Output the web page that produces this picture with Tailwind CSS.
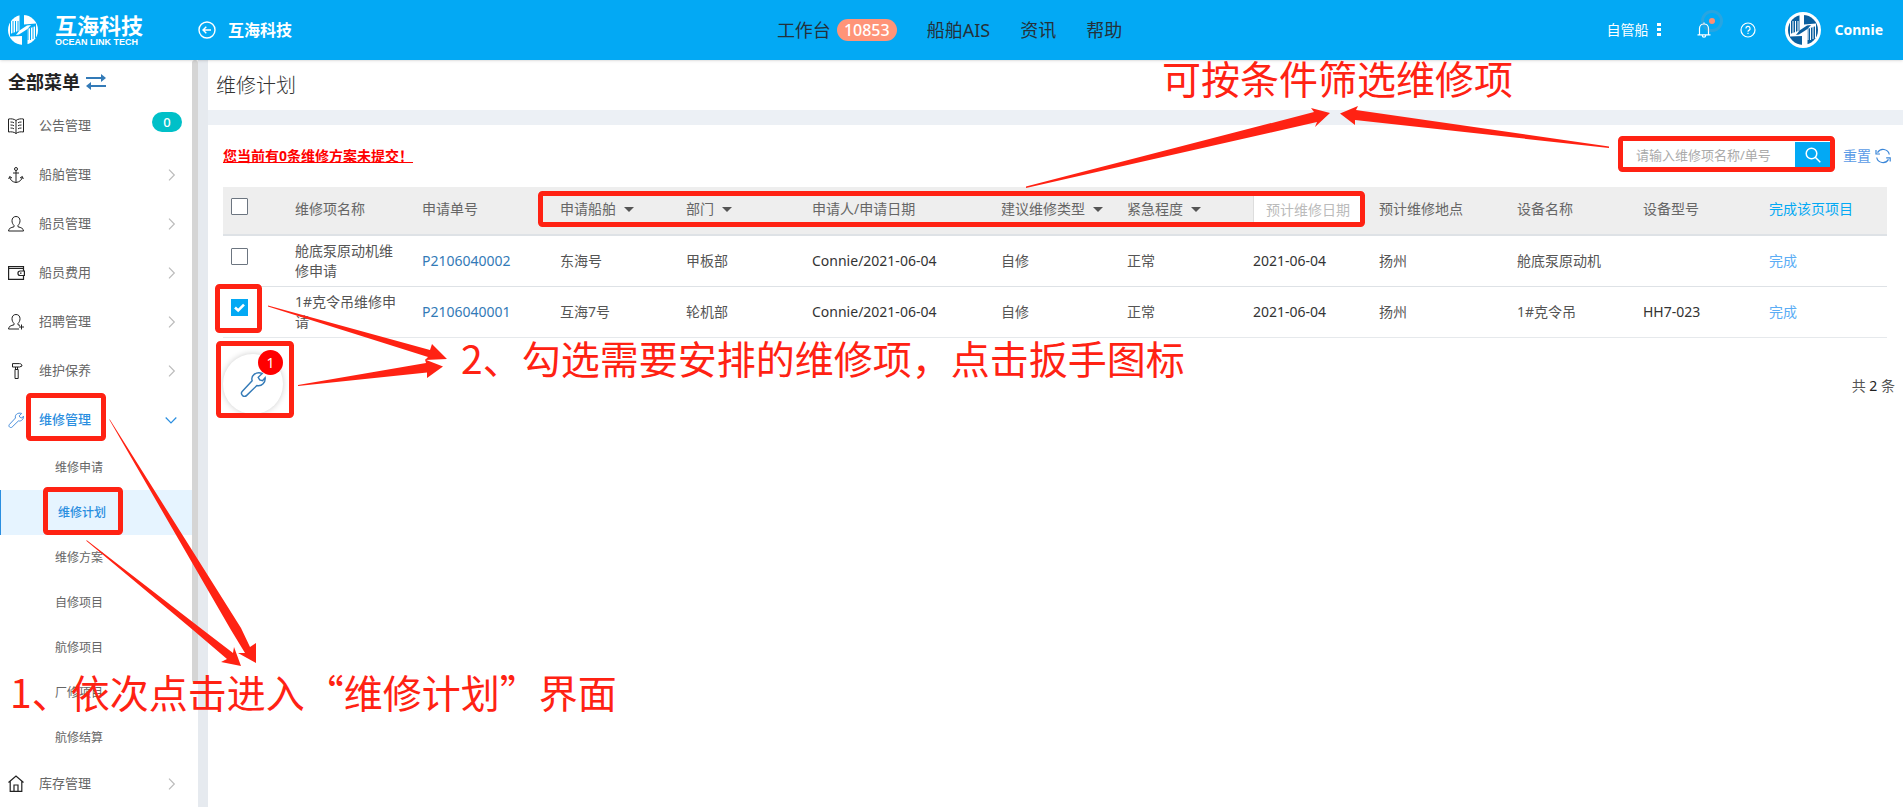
<!DOCTYPE html>
<html lang="zh-CN">
<head>
<meta charset="utf-8">
<meta name="viewport" content="width=device-width, initial-scale=1">
<title>维修计划</title>
<script src="https://cdn.jsdelivr.net/npm/@tailwindcss/browser@4"></script>
</head>
<body class="relative flex h-screen flex-col overflow-hidden bg-[#ecf0f5] font-['Noto_Sans','Noto_Sans_CJK_SC',sans-serif] text-sm text-[#333]">

<!-- Shared emblem: striped disc crossed by an S-shaped ribbon -->
<svg class="absolute size-0" aria-hidden="true">
  <mask id="emblem-cut" maskUnits="userSpaceOnUse" x="0" y="0" width="36" height="36">
    <circle cx="18" cy="18" r="15" fill="#fff"/>
    <path stroke="#000" stroke-width="1" d="M5.500 9v14M8 9v15M10.500 9v14M13 9v12M23 17v11M25.500 16v12M28 15v12M30.500 14v12"/>
    <path fill="#000" d="M14.500 2.500H19V12.500L31 11.500V14L22.500 17V33.500H17V24L5 24.500V22L14.500 18.500z"/>
  </mask>
  <symbol id="emblem" viewBox="3 3 30 30">
    <g mask="url(#emblem-cut)" fill="currentColor"><rect width="36" height="36"/></g>
    <path fill="currentColor" d="M14.500 18.500 22 13.500 26 13 22.500 17 14 22.500 11 23z"/>
  </symbol>
</svg>

<!-- Top bar -->
<header class="relative z-10 flex h-15 shrink-0 items-center bg-[#03a9f4] text-white shadow-sm">
  <div class="flex flex-1 items-center">
    <a href="#" class="flex w-48 items-center gap-4 pl-2" aria-label="互海科技 OCEAN LINK TECH">
      <svg class="size-[30px] shrink-0"><use href="#emblem"/></svg>
      <span class="flex flex-col pl-px">
        <span class="text-[22px] leading-6 font-bold">互海科技</span>
        <span class="font-['Liberation_Sans',sans-serif] text-[9px] leading-[10px] font-bold">OCEAN LINK TECH</span>
      </span>
    </a>
    <a href="#" class="flex items-center gap-3 pl-1.5 text-base font-bold">
      <svg class="size-[18px]" viewBox="0 0 18 18" fill="none" stroke="#fff" stroke-width="1.4"><circle cx="9" cy="9" r="8"/><path d="M13 9H5M8.300 5.700 5 9l3.300 3.300"/></svg>
      互海科技
    </a>
  </div>
  <nav class="flex items-center gap-[30px] pl-4 text-lg text-[#24313a]">
    <a href="#" class="flex items-center gap-1.5">工作台 <span class="rounded-full bg-[#ff9478] px-[7px] text-base leading-[22px] font-medium text-white">10853</span></a>
    <a href="#">船舶AIS</a>
    <a href="#">资讯</a>
    <a href="#">帮助</a>
  </nav>
  <div class="flex flex-1 items-center justify-end pr-5">
    <button type="button" class="flex items-center gap-2">自管船
      <svg class="h-3.5 w-1" viewBox="0 0 4 14" fill="#fff"><path d="M0 0h4v3H0zM0 5h4v3H0zM0 10h4v3H0z"/></svg>
    </button>
    <button type="button" aria-label="通知" class="relative ml-9">
      <svg class="h-4 w-3.5" viewBox="0 0 14 16" fill="none" stroke="#fff" stroke-width="1.200"><path d="M.5 12.800h13M2.500 12.800V6.500C2.500 3.800 4.500 2 7 2s4.500 1.800 4.500 4.500v6.300M7 2V.5M5.300 13.500a1.700 1.700 0 0 0 3.400 0"/></svg>
      <span class="absolute -top-3 left-1 flex size-[22px] items-center justify-center rounded-full border-[3px] border-[#ff9478]/15"><span class="size-1.5 rounded-full bg-[#ff8f73]"></span></span>
    </button>
    <button type="button" aria-label="帮助" class="ml-[29px]">
      <svg class="size-4" viewBox="0 0 16 16" fill="none" stroke="#fff" stroke-width="1.200"><circle cx="8" cy="8" r="7"/><path d="M5.900 6.500a2.100 2.100 0 1 1 3 1.900c-.6.300-.9.600-.9 1.300M8 10.800v1.200"/></svg>
    </button>
    <a href="#" class="ml-[29px] flex items-center gap-3.5 font-bold">
      <span class="flex size-9 items-center justify-center rounded-full bg-white text-[#0b5f9e]"><svg class="size-[30px]"><use href="#emblem"/></svg></span>
      Connie
    </a>
  </div>
</header>

<div class="flex min-h-0 flex-1">
  <!-- Side menu -->
  <aside class="flex w-[198px] shrink-0 overflow-hidden bg-white">
    <nav class="w-48 shrink-0 text-[13px] text-[#666]">
      <div class="flex h-[42px] items-center gap-1.5 pt-0.5 pl-2 text-lg font-bold text-[#222]">全部菜单
        <svg class="h-4 w-5" viewBox="0 0 20 16" fill="#337ab7"><path d="M0 3h15V0l5 4-5 4V5H0zM20 13H5v3l-5-4 5-4v3h15z"/></svg>
      </div>
      <a href="#" class="flex h-[49px] items-center gap-[15px] pb-0.5 pl-2">
        <svg class="size-4 text-[#222]" viewBox="0 0 16 16" fill="none" stroke="currentColor" stroke-width="1"><path d="M8 2.500C6 .8 3 .6.500 1v13c2.500-.4 5.500-.2 7.500 1.500 2-1.700 5-1.900 7.500-1.500V1C13 .6 10 .8 8 2.500zM8 2.500v13M2.500 4c1.500 0 2.500.2 3.500.8M2.500 7c1.500 0 2.500.2 3.500.8M2.500 10c1.500 0 2.500.2 3.500.8M13.500 4c-1.500 0-2.500.2-3.500.8M13.500 7c-1.500 0-2.500.2-3.500.8M13.500 10c-1.500 0-2.500.2-3.500.8"/></svg>
        公告管理
        <span class="mr-2.5 mb-2 ml-auto w-[30px] rounded-full bg-[#00c0c8] text-center leading-5 font-medium text-white">0</span>
      </a>
      <a href="#" class="flex h-[49px] items-center gap-[15px] pb-0.5 pl-2">
        <svg class="size-4 text-[#222]" viewBox="0 0 16 16" fill="none" stroke="currentColor"><circle cx="8" cy="2" r="1.500"/><path d="M8 3.500v12M5 6h6M.7 12l1-2.500L4 11M15.300 12l-1-2.500L12 11M1.700 9.800C2 13 4.500 15 8 15.500c3.500-.5 6-2.500 6.300-5.700"/></svg>
        船舶管理
        <svg class="mr-[15px] ml-auto size-3 text-[#bbb]" viewBox="0 0 12 12" fill="none" stroke="currentColor" stroke-width="1.200"><path d="M4 .7 9.300 6 4 11.300"/></svg>
      </a>
      <a href="#" class="flex h-[49px] items-center gap-[15px] pb-0.5 pl-2">
        <svg class="size-4 text-[#222]" viewBox="0 0 16 16" fill="none" stroke="currentColor"><path d="M8 .5c2.500 0 4 1.700 4 4.200 0 2-.8 3.600-2 4.600v1.500c3 .7 5.500 1.700 5.500 4.200H.5C.5 12.500 3 11.500 6 10.800V9.300c-1.200-1-2-2.600-2-4.600C4 2.200 5.500.5 8 .5z"/></svg>
        船员管理
        <svg class="mr-[15px] ml-auto size-3 text-[#bbb]" viewBox="0 0 12 12" fill="none" stroke="currentColor" stroke-width="1.200"><path d="M4 .7 9.300 6 4 11.300"/></svg>
      </a>
      <a href="#" class="flex h-[49px] items-center gap-[15px] pb-0.5 pl-2">
        <svg class="-mr-px h-4 w-[17px] text-[#222]" viewBox="0 0 17 16" fill="none" stroke="currentColor" stroke-width="1.200"><path d="M15.500 4V1.600H.6v12.800h14.900V12M.6 3.500h14.900M16.400 6h-4.200c-3 0-3 4.500 0 4.500h4.200zM12 8.200h1.500M15.500 4v2M15.500 10.500V12"/></svg>
        船员费用
        <svg class="mr-[15px] ml-auto size-3 text-[#bbb]" viewBox="0 0 12 12" fill="none" stroke="currentColor" stroke-width="1.200"><path d="M4 .7 9.300 6 4 11.300"/></svg>
      </a>
      <a href="#" class="flex h-[49px] items-center gap-[15px] pb-0.5 pl-2">
        <svg class="size-4 text-[#222]" viewBox="0 0 16 16" fill="none" stroke="currentColor"><path d="M11 15H.5C.5 12.500 3 11.500 6 10.800V9.300c-1.200-1-2-2.600-2-4.600C4 2.200 5.500.5 8 .5s4 1.700 4 4.200c0 2-.8 3.600-2 4.600v1.500l2 .6M13.500 10.500v5M11 13h5"/></svg>
        招聘管理
        <svg class="mr-[15px] ml-auto size-3 text-[#bbb]" viewBox="0 0 12 12" fill="none" stroke="currentColor" stroke-width="1.200"><path d="M4 .7 9.300 6 4 11.300"/></svg>
      </a>
      <a href="#" class="flex h-[49px] items-center gap-[15px] pb-0.5 pl-2">
        <svg class="size-4 text-[#222]" viewBox="0 0 16 16" fill="none" stroke="currentColor"><path d="M4.500.6h7c1.500 0 2.300.8 2.500 2.400L11.500 4h-7zM7.500 4v2.500M9.500 4v2.500M7 6.500h3.200v9H7z"/></svg>
        维护保养
        <svg class="mr-[15px] ml-auto size-3 text-[#bbb]" viewBox="0 0 12 12" fill="none" stroke="currentColor" stroke-width="1.200"><path d="M4 .7 9.300 6 4 11.300"/></svg>
      </a>
      <a href="#" class="flex h-[49px] items-center gap-[15px] pb-0.5 pl-2 font-medium text-[#2a8ee0]">
        <svg class="size-4" viewBox="0 0 24 24" fill="none" stroke="#4a8fdc" stroke-width="1.500"><path d="M20.500 2.200 16.800 5.800l1.400 2.400 2.600.8 2.400-2.800c.6 4.200-3 8.200-7.600 7.200L6.200 22.500c-2.600 2.600-6.500-1.200-4-3.900l9-9.600C9.800 4.400 14.500.2 20.500 2.200z"/></svg>
        维修管理
        <svg class="mr-[15px] ml-auto size-3 text-[#2a8ee0]" viewBox="0 0 12 12" fill="none" stroke="currentColor" stroke-width="1.200"><path d="M.7 3.500 6 8.800l5.300-5.300"/></svg>
      </a>
      <div class="flex flex-col text-xs">
        <a href="#" class="pl-[55px] leading-[45px]">维修申请</a>
        <a href="#" class="border-l border-[#2a8ee0] bg-[#e6f4ff] pl-[57px] leading-[45px] font-medium text-[#2a8ee0]">维修计划</a>
        <a href="#" class="pl-[55px] leading-[45px]">维修方案</a>
        <a href="#" class="pl-[55px] leading-[45px]">自修项目</a>
        <a href="#" class="pl-[55px] leading-[45px]">航修项目</a>
        <a href="#" class="pl-[55px] leading-[45px]">厂修项目</a>
        <a href="#" class="pl-[55px] leading-[45px]">航修结算</a>
      </div>
      <a href="#" class="flex h-[49px] items-center gap-[15px] pb-0.5 pl-2">
        <svg class="h-[17px] w-4 text-[#222]" viewBox="0 0 16 17" fill="none" stroke="currentColor" stroke-width="1.200"><path d="M.5 7.500 8 1l7.500 6.500M2.200 6.500v9.900h11.600V6.500M6 16.400V10h4v6.400"/></svg>
        库存管理
        <svg class="mr-[15px] ml-auto size-3 text-[#bbb]" viewBox="0 0 12 12" fill="none" stroke="currentColor" stroke-width="1.200"><path d="M4 .7 9.300 6 4 11.300"/></svg>
      </a>
    </nav>
    <div class="h-5/6 w-1.5 rounded-full bg-[#d5d5d5]"></div>
  </aside>
  <div class="w-2.5 shrink-0 bg-[#e6eaef]"></div>

  <main class="flex min-w-0 flex-1 flex-col gap-[15px]">
    <h1 class="flex h-[50px] shrink-0 items-center bg-white pt-0.5 pl-2 text-xl font-light">维修计划</h1>

    <section class="flex-1 bg-white pl-[15px]">
      <div class="flex h-[62px] items-center justify-between pr-3">
        <a href="#" class="font-bold text-[#f00] underline">您当前有0条维修方案未提交！</a>
        <form class="mb-0.5 flex items-center">
          <input type="text" aria-label="请输入维修项名称/单号" placeholder="请输入维修项名称/单号" class="h-[26px] w-[172px] bg-white pl-[13px] text-[13px] placeholder:text-[#aaa] focus:outline-none">
          <button type="button" aria-label="搜索" class="flex h-[26px] w-[35px] items-center justify-center bg-[#03a9f4]">
            <svg class="size-4" viewBox="0 0 16 16" fill="none" stroke="#fff" stroke-width="1.500"><circle cx="6.500" cy="6.500" r="5.300"/><path d="m10.300 10.300 5 5"/></svg>
          </button>
          <button type="button" class="ml-[13px] flex items-center gap-1 pt-0.5 text-[#5a9be6]">重置
            <svg class="size-4" viewBox="0 0 16 16" fill="none" stroke="#3a86d8" stroke-width="1.200"><path d="M14.300 6.500A6.400 6.400 0 0 0 2.500 4.600M1.700 9.500a6.400 6.400 0 0 0 11.800 1.900M1 2v4h4M15.200 13.500V9.800h-4"/></svg>
          </button>
        </form>
      </div>

      <div class="pr-4">
      <table class="w-full table-fixed border-collapse text-left leading-5">
        <colgroup>
          <col class="w-[64px]"><col class="w-[127px]"><col class="w-[138px]"><col class="w-[126px]"><col class="w-[126px]"><col class="w-[189px]"><col class="w-[126px]"><col class="w-[126px]"><col class="w-[126px]"><col class="w-[138px]"><col class="w-[126px]"><col class="w-[126px]"><col class="w-[126px]">
        </colgroup>
        <thead>
          <tr class="h-12 border-b-2 border-[#dee2e6] bg-[#eee] text-[#666] *:px-2 *:pb-[3px] *:font-normal">
            <th class="pt-[11px] align-top"><input type="checkbox" aria-label="全选" class="block size-[17px] appearance-none rounded-[1px] border border-[#6c7580] bg-white"></th>
            <th>维修项名称</th>
            <th>申请单号</th>
            <th><label class="flex items-center gap-2"><select aria-label="申请船舶" class="field-sizing-content appearance-none"><option>申请船舶</option><option>东海号</option><option>互海7号</option></select><svg class="h-[5px] w-2.5" viewBox="0 0 10 5" fill="#555"><path d="M0 0h10L5 5z"/></svg></label></th>
            <th><label class="flex items-center gap-2"><select aria-label="部门" class="field-sizing-content appearance-none"><option>部门</option><option>甲板部</option><option>轮机部</option></select><svg class="h-[5px] w-2.5" viewBox="0 0 10 5" fill="#555"><path d="M0 0h10L5 5z"/></svg></label></th>
            <th>申请人/申请日期</th>
            <th><label class="flex items-center gap-2"><select aria-label="建议维修类型" class="field-sizing-content appearance-none"><option>建议维修类型</option><option>自修</option></select><svg class="h-[5px] w-2.5" viewBox="0 0 10 5" fill="#555"><path d="M0 0h10L5 5z"/></svg></label></th>
            <th><label class="flex items-center gap-2"><select aria-label="紧急程度" class="field-sizing-content appearance-none"><option>紧急程度</option><option>正常</option></select><svg class="h-[5px] w-2.5" viewBox="0 0 10 5" fill="#555"><path d="M0 0h10L5 5z"/></svg></label></th>
            <th><input type="text" aria-label="预计维修日期" placeholder="预计维修日期" class="block h-7 w-full border border-[#ddd] bg-white pl-3 placeholder:text-[#bbb]"></th>
            <th>预计维修地点</th>
            <th>设备名称</th>
            <th>设备型号</th>
            <th><a href="#" class="text-[#03a9f4]">完成该页项目</a></th>
          </tr>
        </thead>
        <tbody class="text-[#333]">
          <tr class="border-b border-[#dee2e6] *:px-2 *:py-[5px]">
            <td class="align-top"><input type="checkbox" aria-label="选择 P2106040002" class="mt-[7px] block size-[17px] appearance-none rounded-[1px] border border-[#6c7580] bg-white"></td>
            <td class="text-[#555]">舱底泵原动机维修申请</td>
            <td><a href="#" class="text-[#337ab7]">P2106040002</a></td>
            <td class="text-[#555]">东海号</td><td class="text-[#555]">甲板部</td><td>Connie/2021-06-04</td><td class="text-[#555]">自修</td><td class="text-[#555]">正常</td><td>2021-06-04</td><td class="text-[#555]">扬州</td><td class="text-[#555]">舱底泵原动机</td><td></td>
            <td><a href="#" class="text-[#5badf5]">完成</a></td>
          </tr>
          <tr class="border-b border-[#e6e9ec] *:px-2 *:py-[5px]">
            <td class="align-top"><span class="relative mt-[7px] block size-[17px]"><input type="checkbox" checked aria-label="选择 P2106040001" class="block size-[17px] appearance-none border border-[#6c7580] bg-white checked:border-[#03a9f4] checked:bg-[#03a9f4]"><svg class="pointer-events-none absolute inset-0 size-[17px]" viewBox="0 0 17 17" fill="none" stroke="#fff" stroke-width="2.600"><path d="m4 8.500 3.200 3L13 5.700"/></svg></span></td>
            <td class="text-[#555]">1#克令吊维修申请</td>
            <td><a href="#" class="text-[#337ab7]">P2106040001</a></td>
            <td class="text-[#555]">互海7号</td><td class="text-[#555]">轮机部</td><td>Connie/2021-06-04</td><td class="text-[#555]">自修</td><td class="text-[#555]">正常</td><td>2021-06-04</td><td class="text-[#555]">扬州</td><td class="text-[#555]">1#克令吊</td><td>HH7-023</td>
            <td><a href="#" class="text-[#5badf5]">完成</a></td>
          </tr>
        </tbody>
      </table>
      </div>

      <div class="flex items-start justify-between pt-4 pr-2">
        <button type="button" aria-label="安排维修" class="relative flex size-15 items-center justify-center rounded-full bg-white shadow-[0_0_6px_rgba(0,0,0,0.2)]">
          <svg class="size-[26px]" viewBox="0 0 24 24" fill="none" stroke="#337ab7" stroke-width="1.300"><path d="M20.500 2.200 16.800 5.800l1.400 2.400 2.600.8 2.400-2.800c.6 4.200-3 8.200-7.600 7.200L6.200 22.500c-2.600 2.600-6.500-1.200-4-3.900l9-9.600C9.800 4.400 14.500.2 20.500 2.200z"/></svg>
          <span class="absolute -top-1 right-0 size-[25px] rounded-full bg-[#f00] text-center leading-[25px] text-white">1</span>
        </button>
        <p class="pt-[22px] text-[#555]">共 <span class="text-[#222]">2</span> 条</p>
      </div>
    </section>
  </main>
</div>

<!-- Tutorial annotations drawn over the page -->
<svg class="pointer-events-none absolute top-0 left-0 z-20 h-[807px] w-[1903px]" viewBox="0 0 1903 807">
  <g fill="none" stroke="#ff2213" stroke-width="5">
    <rect x="540.500" y="193.500" width="822" height="31" rx="2"/>
    <rect x="1620.500" y="138.500" width="212" height="31" rx="2"/>
    <rect x="217.500" y="286.500" width="42" height="44" rx="2"/>
    <rect x="218.500" y="343.500" width="73" height="72" rx="2"/>
    <rect x="28.500" y="395.500" width="75" height="43" rx="2"/>
    <rect x="45.500" y="489.500" width="75" height="43" rx="2"/>
  </g>
  <g fill="#ff2213">
    <path d="M1026 186.500 1314 112 1311 108 1330 113 1315 127 1317 122 1026 188z"/>
    <path d="M1609 146.500 1356 110 1358 106 1340 113.500 1355 125 1355 120 1609 148z"/>
    <path d="M268 305.500 430 350 432 344 447 359 425 360 428 357 268 306.500z"/>
    <path d="M298 385 426 363 425 359.500 443 366.500 427 378 427 372.500 298 386z"/>
    <path d="M109.500 419 241 628 250 647 256 643 256 663 238 653 245 653 231 630 109.500 420z"/>
    <path d="M86.500 540 203 630 233 653 234 647 241 666 221 662 227 659 193 630 86.500 541z"/>
  </g>
</svg>
<p class="pointer-events-none absolute top-[57px] left-[1162px] z-20 font-['Noto_Sans_CJK_SC',sans-serif] text-[39px] leading-10 whitespace-nowrap text-[#ff2213]">可按条件筛选维修项</p>
<p class="pointer-events-none absolute top-[337px] left-[461px] z-20 font-['Noto_Sans_CJK_SC',sans-serif] text-[39px] leading-10 whitespace-nowrap text-[#ff2213]">2、勾选需要安排的维修项，点击扳手图标</p>
<p class="pointer-events-none absolute top-[671px] left-[10px] z-20 font-['Noto_Sans_CJK_SC',sans-serif] text-[39px] leading-10 whitespace-nowrap text-[#ff2213]">1、依次点击进入“维修计划”界面</p>
</body>
</html>
